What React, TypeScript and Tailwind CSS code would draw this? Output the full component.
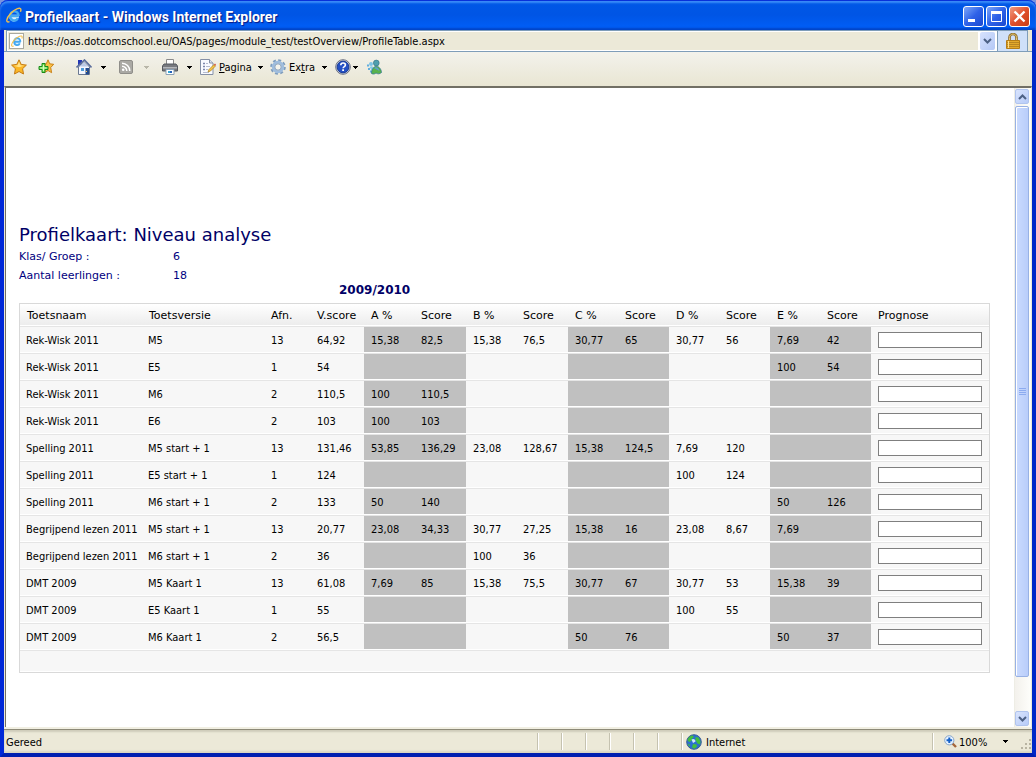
import type { ReactNode } from "react";
import clsx from "clsx";

const columns = [
  { label: "Toetsnaam", width: "w-[122px]" },
  { label: "Toetsversie", width: "w-[122px]" },
  { label: "Afn.", width: "w-[46px]" },
  { label: "V.score", width: "w-[54px]" },
  { label: "A %", width: "w-[50px]", shaded: true },
  { label: "Score", width: "w-[52px]", shaded: true },
  { label: "B %", width: "w-[50px]" },
  { label: "Score", width: "w-[52px]" },
  { label: "C %", width: "w-[50px]", shaded: true },
  { label: "Score", width: "w-[51px]", shaded: true },
  { label: "D %", width: "w-[50px]" },
  { label: "Score", width: "w-[51px]" },
  { label: "E %", width: "w-[50px]", shaded: true },
  { label: "Score", width: "w-[51px]", shaded: true },
];

const rows = [
  ["Rek-Wisk 2011", "M5", "13", "64,92", "15,38", "82,5", "15,38", "76,5", "30,77", "65", "30,77", "56", "7,69", "42"],
  ["Rek-Wisk 2011", "E5", "1", "54", "", "", "", "", "", "", "", "", "100", "54"],
  ["Rek-Wisk 2011", "M6", "2", "110,5", "100", "110,5", "", "", "", "", "", "", "", ""],
  ["Rek-Wisk 2011", "E6", "2", "103", "100", "103", "", "", "", "", "", "", "", ""],
  ["Spelling 2011", "M5 start + 1", "13", "131,46", "53,85", "136,29", "23,08", "128,67", "15,38", "124,5", "7,69", "120", "", ""],
  ["Spelling 2011", "E5 start + 1", "1", "124", "", "", "", "", "", "", "100", "124", "", ""],
  ["Spelling 2011", "M6 start + 1", "2", "133", "50", "140", "", "", "", "", "", "", "50", "126"],
  ["Begrijpend lezen 2011", "M5 start + 1", "13", "20,77", "23,08", "34,33", "30,77", "27,25", "15,38", "16", "23,08", "8,67", "7,69", ""],
  ["Begrijpend lezen 2011", "M6 start + 1", "2", "36", "", "", "100", "36", "", "", "", "", "", ""],
  ["DMT 2009", "M5 Kaart 1", "13", "61,08", "7,69", "85", "15,38", "75,5", "30,77", "67", "30,77", "53", "15,38", "39"],
  ["DMT 2009", "E5 Kaart 1", "1", "55", "", "", "", "", "", "", "100", "55", "", ""],
  ["DMT 2009", "M6 Kaart 1", "2", "56,5", "", "", "", "", "50", "76", "", "", "50", "37"],
];

function ExplorerIcon({ className }: { className: string }) {
  return (
    <svg viewBox="0 0 16 16" className={className} fill="none" aria-hidden="true">
      <path d="M12.800 9.500H5c.3 3.800 4.400 4 5.600 1.700" stroke="#d9f1ff" strokeWidth="3.600" />
      <path d="M12.800 9H4.200C4 3 12.500 2.600 12.600 9ZM4.200 9.200c.2 5 6 5.400 7.500 2" stroke="#45a9f2" strokeWidth="2.400" />
      <path d="M3.500 14.600C-.8 16.500.4 11 4.600 6.500 8.800 2 15.200-.8 14.900 3c0 .6-.2 1.200-.5 1.800" stroke="#f5c04a" strokeWidth="1.400" />
    </svg>
  );
}

function StarIcon() {
  return (
    <svg viewBox="0 0 16 16" className="size-4" aria-hidden="true">
      <path d="m8 .8 2.200 4.600 5.200.7-3.800 3.600.9 5.300L8 12.500 3.500 15l.9-5.300L.6 6.100l5.200-.7Z" fill="#fbb726" stroke="#c47a12" />
      <path d="m8 2.800 1.500 3.400 3.700.5L8 8.200 2.800 6.700l3.700-.5Z" fill="#ffe28a" />
    </svg>
  );
}

function AddStarIcon() {
  return (
    <svg viewBox="0 0 16 16" className="size-4" aria-hidden="true">
      <path d="m10 .8 1.700 4 4 .5-3 3.200.9 5.200-3.600-2.200-3.600 2.200.9-5.200-3-3.200 4-.5Z" fill="#fbc044" stroke="#c9821a" />
      <path d="M4 4.500h3v3h3v3H7v3H4v-3H1v-3h3Z" fill="#7fe05a" stroke="#178a1b" />
      <path d="M5.500 6v6M2.500 9h6" stroke="#d5ffc0" />
    </svg>
  );
}

function HomeIcon() {
  return (
    <svg viewBox="0 0 16 16" className="size-4" aria-hidden="true">
      <path d="M2 1h4v5H2Z" fill="#2337b5" />
      <path d="M2.500 8v7.500h11V8L8 2.500Z" fill="#f4f7ff" stroke="#6a7890" />
      <path d="M.5 8.500 8.500 1l7 7.500" fill="none" stroke="#5c6f9d" strokeWidth="1.600" />
      <path d="M8 3.500 4 7.500h8Z" fill="#b9c8e6" />
      <path d="M5 9h3v3H5Z" fill="#4f9bd8" />
      <path d="M9.500 9H13v6.500H9.500Z" fill="#234a8e" />
      <path d="M10 12h1v1h-1Z" fill="#ffd35c" />
    </svg>
  );
}

function FeedIcon() {
  return (
    <svg viewBox="0 0 14 14" className="size-[14px]" aria-hidden="true">
      <rect x=".5" y=".5" width="13" height="13" rx="1.500" fill="#aaa9a4" stroke="#8f8e89" />
      <g fill="none" stroke="#fff" strokeWidth="1.500">
        <path d="M3 6.200A4.800 4.800 0 0 1 7.800 11M3 3.200A7.800 7.800 0 0 1 10.800 11" />
      </g>
      <circle cx="4.200" cy="9.800" r="1.300" fill="#fff" />
    </svg>
  );
}

function PrinterIcon() {
  return (
    <svg viewBox="0 0 16 16" className="size-4" aria-hidden="true">
      <path d="M4.500 6V.5h7V6" fill="#fff" stroke="#8a8a8a" />
      <path d="M2 5h12l1.500 2v5H.5V7Z" fill="#77797e" stroke="#55585e" />
      <path d="M1 8h14v1.500H1Z" fill="#b4b7bb" />
      <path d="M4 10.500h8v5H4Z" fill="#fff" stroke="#8aa0b5" />
      <path d="M6 12h2v2H6Z" fill="#37a7d8" />
      <path d="M8 12h2v2H8Z" fill="#2461b8" />
    </svg>
  );
}

function PageIcon() {
  return (
    <svg viewBox="0 0 16 16" className="size-4" aria-hidden="true">
      <path d="M.5.5h9l3.500 3.500v11.500H.5Z" fill="#f8faff" stroke="#8590a6" />
      <path d="M9.500.5V4H13" fill="#dde4f2" stroke="#8590a6" />
      <path d="M3 4.500h2M3 7.500h2M3 10.500h2" stroke="#7c86ab" strokeWidth="1.500" />
      <path d="M6 4.500h2M6 7.500h4M6 10.500h2M3 13.500h6" stroke="#b4bbd0" />
      <path d="m8 13 1-2.500 5-5L15.500 7l-5 5Z" fill="#f7c746" stroke="#a97b1b" strokeWidth=".7" />
      <path d="m14 5.500 1-1 1 1-1 1.500Z" fill="#d6574b" />
    </svg>
  );
}

function GearIcon() {
  return (
    <svg viewBox="0 0 16 16" className="size-4" fill="none" aria-hidden="true">
      <circle cx="8" cy="8" r="6.800" stroke="#7f9dbd" strokeWidth="2" strokeDasharray="3 2.340" />
      <circle cx="8" cy="8" r="4.800" stroke="#9fbdde" strokeWidth="2.800" />
      <circle cx="8" cy="8" r="3.200" fill="#f5f4ec" stroke="#6d8cb0" strokeWidth=".8" />
    </svg>
  );
}

function HelpIcon() {
  return (
    <svg viewBox="0 0 16 16" className="size-4" fill="none" aria-hidden="true">
      <circle cx="8" cy="8" r="7.300" fill="#d7dbe6" stroke="#6a7080" />
      <circle cx="8" cy="8" r="5.900" fill="#2450c4" stroke="#173a93" />
      <path d="M5.800 6.200c0-3 4.600-2.800 4.600-.2 0 1.600-2.300 1.500-2.300 3.300" stroke="#fff" strokeWidth="1.600" />
      <path d="M7.200 10.300H9V12H7.200Z" fill="#fff" />
    </svg>
  );
}

function MessengerIcon() {
  return (
    <svg viewBox="0 0 16 16" className="size-4" aria-hidden="true">
      <circle cx="5" cy="5" r="2" fill="#7fc4e6" />
      <path d="M1 5.500h2v2H1ZM2 9h2v2H2ZM4 11.500h2v2H4Z" fill="#62aede" />
      <path d="M3.500 8c2-1.500 4-.5 4.500 1.500L6 12Z" fill="#88cbe8" />
      <circle cx="10.300" cy="4" r="2.900" fill="#4f9fae" stroke="#2d6f86" strokeWidth=".6" />
      <path d="M5.500 14.500C5.500 10 8 7.300 10.500 7.300s5 3.200 5 6.200c-2 1.800-4 1.600-5.500.5-1.500 1.300-3 1.300-4.500.5Z" fill="#58b24c" stroke="#2b7190" strokeWidth=".7" />
      <path d="M8 9c2-2 5 0 5.500 3Z" fill="#5b9cd2" />
    </svg>
  );
}

function LockIcon() {
  return (
    <svg viewBox="0 0 14 16" className="h-4 w-[14px]" fill="none" aria-hidden="true">
      <path d="M3.500 8V4.500c0-4.600 7-4.600 7 0V8" stroke="#8b6a28" strokeWidth="2.600" />
      <path d="M3.500 8V4.500c0-4.600 7-4.600 7 0V8" stroke="#e5c56f" strokeWidth="1" />
      <path d="M.5 7.500h13v8H.5Z" fill="#e3a92c" stroke="#b57d18" />
      <path d="M1 9.500h12M1 11.500h12M1 13.500h12" stroke="#b98522" />
      <path d="M2.500 8v7" stroke="#ffe08a" />
    </svg>
  );
}

function GlobeIcon() {
  return (
    <svg viewBox="0 0 16 16" className="size-4" aria-hidden="true">
      <circle cx="8" cy="8" r="7.300" fill="#2b6fcf" stroke="#3c5f93" />
      <path d="M1.500 6c.5-2 2.500-4.300 5-4.500L8 3 6 4.500 5.500 7 3 8ZM9.500 3l3 .5 2 4-.5 3-2.500-1-2-3.500ZM7 10l3.500.5.5 2-2.500 2.300L6 13.500ZM2 9.500l2 1.500v1.500L2.500 11.500Z" fill="#43bf3d" />
      <path d="M5.500 5.500c2-1.500 4 0 4 2L7 9Z" fill="#cfe8ff" />
    </svg>
  );
}

function ZoomIcon() {
  return (
    <svg viewBox="0 0 13 13" className="size-[13px]" fill="none" aria-hidden="true">
      <path d="m8.500 8.500 3.500 3.500" stroke="#a5673b" strokeWidth="2.400" />
      <circle cx="5.300" cy="5.300" r="4.600" fill="#e6f2ff" stroke="#87a5c9" />
      <path d="M5.300 2.500v5.600M2.500 5.300h5.600" stroke="#1460c8" strokeWidth="2" />
    </svg>
  );
}

function Caret({ className = "text-black" }: { className?: string }) {
  return (
    <svg viewBox="0 0 5 3" className={clsx("h-[3px] w-[5px] shrink-0", className)} shapeRendering="crispEdges" aria-hidden="true">
      <path d="M0 0h5L2.500 3Z" fill="currentColor" />
    </svg>
  );
}

function Chevron({ up = false }: { up?: boolean }) {
  return (
    <svg viewBox="0 0 9 6" className={clsx("h-[6px] w-[9px]", up && "rotate-180")} fill="none" aria-hidden="true">
      <path d="m1 1 3.500 3.500L8 1" stroke="#4d6185" strokeWidth="2" />
    </svg>
  );
}

type WindowButtonProps = { label: string; close?: boolean; children: ReactNode };

function WindowButton({ label, close, children }: WindowButtonProps) {
  return (
    <button
      type="button"
      aria-label={label}
      className={clsx(
        "grid size-[21px] place-items-center rounded-[3px] border border-white bg-linear-to-br",
        close ? "from-[#f09a80] via-[#e0502c] to-[#c83c12]" : "from-[#7fa5f7] via-[#2f62e8] to-[#1a48d0]",
      )}
    >
      <svg viewBox="0 0 19 19" className="size-[19px]" fill="none" stroke="#fff" aria-hidden="true">
        {children}
      </svg>
    </button>
  );
}

function TitleBar() {
  return (
    <header className="flex h-[30px] shrink-0 items-center rounded-t-lg bg-linear-to-b from-[#0058e6] via-[#0055e5] to-[#0060fa] pr-[6px] pl-[6px] shadow-[inset_0_1px_0_#0831d9,inset_0_3px_2px_#3a8cf8,inset_0_-2px_2px_#0144c8]">
      <ExplorerIcon className="size-4" />
      <h1 className="ml-[3px] flex-1 pt-[3px] font-[Roboto,sans-serif] text-[14px] leading-5 font-bold whitespace-nowrap text-white [text-shadow:1px_1px_1px_#0a1883]">
        Profielkaart - Windows Internet Explorer
      </h1>
      <div className="flex gap-[2px] pt-[3px]">
        <WindowButton label="Minimaliseren">
          <path d="M4 13.500h7" strokeWidth="3" />
        </WindowButton>
        <WindowButton label="Maximaliseren">
          <path d="M4.500 4.500h10v10h-10Z" />
          <path d="M4 5.500h11" strokeWidth="3" />
        </WindowButton>
        <WindowButton label="Sluiten" close>
          <path d="m4.500 4.500 10 10m0-10-10 10" strokeWidth="2.300" />
        </WindowButton>
      </div>
    </header>
  );
}

function AddressBar() {
  return (
    <div className="flex h-[22px] shrink-0 border-b border-[#7f9db9] bg-[#ece9d8] pr-1 pl-[2px]">
      <div className="flex flex-1 items-center border-t border-l border-[#7f9db9] bg-[#ece9d8] pl-[2px] shadow-[inset_1px_1px_0_#fff,inset_0_-1px_0_#fff]">
        <span className="grid h-4 w-[15px] place-items-center border border-[#a9a9a0] bg-white">
          <ExplorerIcon className="size-3" />
        </span>
        <input
          aria-label="Adres"
          readOnly
          defaultValue="https://oas.dotcomschool.eu/OAS/pages/module_test/testOverview/ProfileTable.aspx"
          className="ml-1 h-4 flex-1 bg-transparent pt-[2px] text-[11px] outline-none"
        />
        <div className="bg-white px-[2px] py-px">
          <button type="button" aria-label="Adressen tonen" className="grid h-[18px] w-[15px] place-items-center rounded-[2px] bg-linear-to-br from-[#d7e2fd] to-[#b4c8f6]">
            <Chevron />
          </button>
        </div>
      </div>
      <button type="button" aria-label="Beveiligingsrapport" className="grid w-[31px] place-items-center border-x border-t border-[#7f9db9] bg-[#cfe0f9]">
        <LockIcon />
      </button>
    </div>
  );
}

function Toolbar() {
  return (
    <nav className="flex h-[34px] shrink-0 items-center bg-linear-to-b from-[#f3f2ec] to-[#e9e6d3] pb-1 pl-[7px] text-[11px] leading-4">
      <button type="button" aria-label="Favorieten">
        <StarIcon />
      </button>
      <button type="button" aria-label="Toevoegen aan Favorieten" className="ml-[11px]">
        <AddStarIcon />
      </button>
      <button type="button" aria-label="Startpagina" className="ml-[22px] flex items-center gap-[9px]">
        <HomeIcon />
        <Caret />
      </button>
      <button type="button" aria-label="Feeds" disabled className="ml-[13px] flex items-center gap-[11px]">
        <FeedIcon />
        <Caret className="text-[#b8b6a8]" />
      </button>
      <button type="button" aria-label="Afdrukken" className="ml-[13px] flex items-center gap-[9px]">
        <PrinterIcon />
        <Caret />
      </button>
      <button type="button" className="ml-2 flex items-center">
        <PageIcon />
        <span className="mr-[6px] ml-[3px] pt-[2px]">
          <u>P</u>agina
        </span>
        <Caret />
      </button>
      <button type="button" className="ml-[7px] flex items-center">
        <GearIcon />
        <span className="mr-[7px] ml-[3px] pt-[2px]">
          Ex<u>t</u>ra
        </span>
        <Caret />
      </button>
      <button type="button" aria-label="Help" className="ml-2 flex items-center gap-[2px]">
        <HelpIcon />
        <Caret />
      </button>
      <button type="button" aria-label="Messenger" className="ml-2">
        <MessengerIcon />
      </button>
    </nav>
  );
}

function ProfileTable() {
  return (
    <table className="w-full table-fixed border-separate border-spacing-0 border border-[#d9d9d9] bg-[#f7f7f7] text-left text-[11px] leading-4 text-black">
      <thead>
        <tr className="h-[23px] bg-linear-to-b from-white to-[#ebebeb] font-['DejaVu_Sans',sans-serif]">
          {columns.map((column, i) => (
            <th key={i} scope="col" className={clsx("border-b border-[#e5e5e5] p-0 pt-px pl-[7px] font-normal whitespace-nowrap shadow-[inset_0_-1px_0_#fff]", column.width)}>
              {column.label}
            </th>
          ))}
          <th scope="col" className="border-b border-[#e5e5e5] p-0 pt-px pl-[7px] font-normal shadow-[inset_0_-1px_0_#fff]">Prognose</th>
        </tr>
      </thead>
      <tbody>
        {rows.map((row, r) => (
          <tr key={r} className="h-[27px]">
            {row.map((value, i) => (
              <td
                key={i}
                className={clsx(
                  "border-b border-[#e5e5e5] p-0 pt-[2px] whitespace-nowrap shadow-[inset_0_-1px_0_#fff]",
                  i < 2 ? "pl-[6px]" : "pl-[7px]",
                  columns[i].shaded && "bg-[#c0c0c0]",
                )}
              >
                {value}
              </td>
            ))}
            <td className="border-b border-[#e5e5e5] px-[7px] py-0 shadow-[inset_0_-1px_0_#fff]">
              <input aria-label={`Prognose ${row[0]} ${row[1]}`} className="block h-4 w-full border border-[#7f7f7f] bg-white px-1 text-[11px] outline-none" />
            </td>
          </tr>
        ))}
      </tbody>
      <tfoot>
        <tr className="h-[21px]">
          <td colSpan={15} className="p-0 shadow-[inset_0_-1px_0_#fff]" />
        </tr>
      </tfoot>
    </table>
  );
}

function ScrollBar() {
  return (
    <div className="flex w-[17px] shrink-0 flex-col gap-[2px] border-l border-[#eeede5] bg-linear-to-r from-[#f3f1ec] to-[#fefefb] py-px pr-[2px]">
      <button type="button" aria-label="Omhoog" className="grid h-[15px] place-items-center rounded-[2px] border border-[#b0c4ee] bg-linear-to-br from-[#d9e4fd] to-[#b7cbf8]">
        <Chevron up />
      </button>
      <div className="flex flex-1 flex-col">
        <div className="grid flex-[571] place-items-center rounded-[2px] border border-[#98b1e4] bg-linear-to-r from-[#cbdbfe] to-[#b9cdfa] shadow-[inset_1px_1px_0_#fff]">
          <span className="flex w-[7px] flex-col gap-px">
            <i className="h-px bg-[#8cabf0]" />
            <i className="h-px bg-[#8cabf0]" />
            <i className="h-px bg-[#8cabf0]" />
            <i className="h-px bg-[#8cabf0]" />
          </span>
        </div>
        <div className="flex-[32]" />
      </div>
      <button type="button" aria-label="Omlaag" className="grid h-[15px] place-items-center rounded-[2px] border border-[#b0c4ee] bg-linear-to-br from-[#d9e4fd] to-[#b7cbf8]">
        <Chevron />
      </button>
    </div>
  );
}

function StatusBar() {
  return (
    <footer className="flex h-6 shrink-0 items-center border-t border-[#8d8a78] bg-[#ece9d8] text-[11px] leading-4 shadow-[inset_0_2px_2px_#cfccba,inset_0_-2px_2px_#d8d5c3]">
      <p className="flex-1 pt-[3px] pl-[2px]">Gereed</p>
      {Array.from({ length: 6 }, (_, i) => (
        <span key={i} className="h-[17px] w-6 border-l border-[#c5c2b0] shadow-[inset_1px_0_0_#fff]" />
      ))}
      <div className="flex h-[17px] w-[251px] items-center gap-1 border-l border-[#c5c2b0] pl-1 shadow-[inset_1px_0_0_#fff]">
        <GlobeIcon />
        <span className="pt-[3px]">Internet</span>
      </div>
      <div className="flex h-[17px] w-[100px] items-center border-l border-[#c5c2b0] pl-[11px] shadow-[inset_1px_0_0_#fff]">
        <button type="button" className="flex items-center">
          <ZoomIcon />
          <span className="ml-[2px] w-[44px] pt-[3px] text-left">100%</span>
          <Caret />
        </button>
        <svg viewBox="0 0 11 11" className="ml-auto size-[11px] self-end" fill="#b8b4a2" aria-hidden="true">
          <path d="M8 0h2v2H8ZM4 4h2v2H4ZM8 4h2v2H8ZM0 8h2v2H0ZM4 8h2v2H4ZM8 8h2v2H8Z" />
        </svg>
      </div>
    </footer>
  );
}

export default function App() {
  return (
    <div className="bg-[#7b93dd] font-['DejaVu_Sans_Condensed','DejaVu_Sans',sans-serif] text-black">
      <div className="flex min-h-screen flex-col rounded-t-lg bg-[#0831d9]">
        <TitleBar />
        <div className="flex flex-1 flex-col border-x-4 border-b-4 border-r-[#0028c8] border-b-[#001fb0] border-l-[#0028d8]">
          <AddressBar />
          <Toolbar />
          <div className="flex flex-1 border-t-2 border-r border-l border-t-[#716f64] border-r-[#ece9d8] border-l-[#ece9d8] bg-white">
            <main className="min-w-0 flex-1 border-l border-[#716f64] pt-[136px] pr-6 pl-[13px]">
              <h2 className="font-['DejaVu_Sans',sans-serif] text-[18px] leading-[22px] text-[#000066]">Profielkaart: Niveau analyse</h2>
              <dl className="grid grid-cols-[154px_1fr] pt-px font-['DejaVu_Sans',sans-serif] text-[11px] leading-[19px] text-[#000080]">
                <dt>Klas/ Groep :</dt>
                <dd>6</dd>
                <dt>Aantal leerlingen :</dt>
                <dd>18</dd>
              </dl>
              <p className="pb-2 pl-[320px] font-['DejaVu_Sans',sans-serif] text-[12px] leading-[10px] font-bold text-[#000066]">2009/2010</p>
              <ProfileTable />
            </main>
            <ScrollBar />
          </div>
          <div className="h-[2px] shrink-0 bg-[#f1efe2]" />
          <StatusBar />
        </div>
      </div>
    </div>
  );
}
